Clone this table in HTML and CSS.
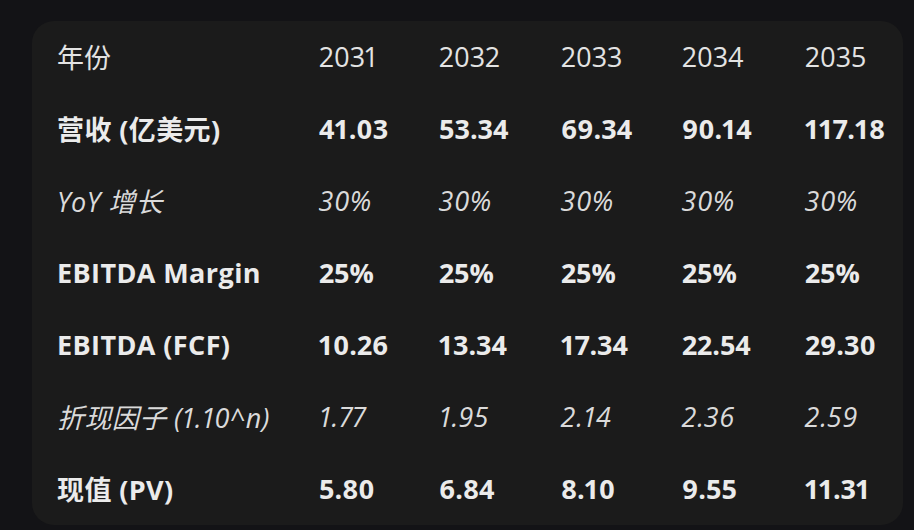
FILE: index.html
```html
<!DOCTYPE html>
<html lang="zh">
<head>
<meta charset="utf-8">
<link rel="stylesheet" href="styles.css">
</head>
<body>
<div class="card">
  <div class="row head">
    <div class="lbl">年份</div><div>2031</div><div>2032</div><div>2033</div><div>2034</div><div>2035</div>
  </div>
  <div class="row bold">
    <div class="lbl">营收 (亿美元)</div><div>41.03</div><div>53.34</div><div>69.34</div><div>90.14</div><div>117.18</div>
  </div>
  <div class="row ital">
    <div class="lbl">YoY 增长</div><div>30%</div><div>30%</div><div>30%</div><div>30%</div><div>30%</div>
  </div>
  <div class="row bold">
    <div class="lbl">EBITDA Margin</div><div>25%</div><div>25%</div><div>25%</div><div>25%</div><div>25%</div>
  </div>
  <div class="row bold">
    <div class="lbl">EBITDA (FCF)</div><div>10.26</div><div>13.34</div><div>17.34</div><div>22.54</div><div>29.30</div>
  </div>
  <div class="row ital">
    <div class="lbl">折现因子 (1.10^n)</div><div>1.77</div><div>1.95</div><div>2.14</div><div>2.36</div><div>2.59</div>
  </div>
  <div class="row bold">
    <div class="lbl">现值 (PV)</div><div>5.80</div><div>6.84</div><div>8.10</div><div>9.55</div><div>11.31</div>
  </div>
</div>
</body>
</html>
```
FILE: styles.css
```css
html, body {
  margin: 0;
  padding: 0;
  background: #131316;
}
body {
  padding: 21px 11px 0 32px;
  height: 530px;
  box-sizing: border-box;
  overflow: hidden;
  font-family: "Open Sans", "Noto Sans CJK SC", sans-serif;
}
.card {
  background: #1b1b1b;
  border-radius: 22px;
  padding: 0 0 0 25px;
  height: 504px;
}
.row {
  display: grid;
  grid-template-columns: 262px 120px 122px 121px 123px auto;
  align-items: center;
  box-sizing: border-box;
  height: 72px;
  padding-bottom: 1px;
  font-size: 27px;
  color: #e3e3e3;
  white-space: nowrap;
  font-variant-numeric: proportional-nums;
}
.row.bold {
  font-weight: 700;
  color: #ebebeb;
}
.row.bold .lbl {
  letter-spacing: 0.4px;
}
.row.ital {
  font-style: italic;
  color: #dadada;
  letter-spacing: 0.4px;
}
```
